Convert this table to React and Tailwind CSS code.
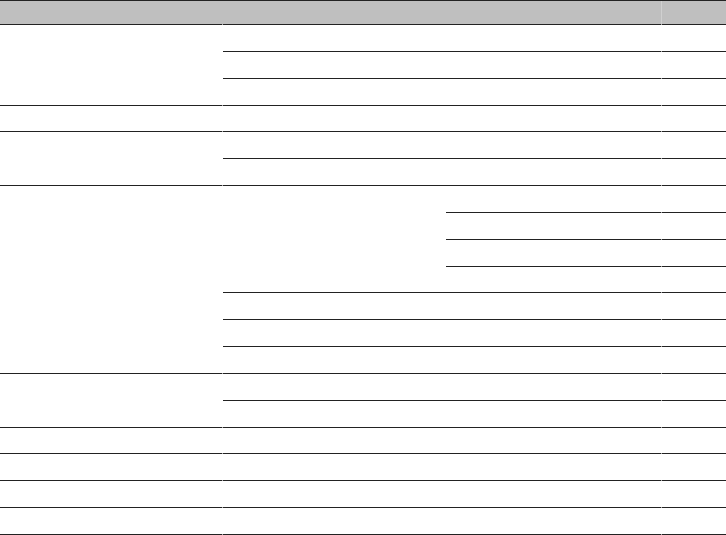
const Cell = ({ className = "" }) => (
  <div className={`border-b border-[#222] ${className}`} />
);

// thin gap between columns, where the dark rules break a little
const Gap = ({ className = "" }) => (
  <div className={`border-b border-[#a8a8a8] ${className}`} />
);

export default function App() {
  return (
    <div className="w-[726px] h-[535px] bg-white grid grid-cols-[222px_1px_223px_215px_1px_64px] grid-rows-[25px_repeat(19,1fr)]">
      {/* header */}
      <div className="col-start-1 row-start-1 bg-[#bfbfbf] border-y border-[#222]" />
      <div className="col-start-2 row-start-1 bg-[#bfbfbf] border-t border-t-[#222] border-b border-b-[#a8a8a8]" />
      <div className="col-start-3 row-start-1 bg-[#bfbfbf] border-y border-[#222]" />
      <div className="col-start-4 row-start-1 bg-[#bfbfbf] border-y border-[#222]" />
      <div className="col-start-5 row-start-1 bg-[#d0d0d0] border-t border-t-[#222] border-b border-b-[#a8a8a8]" />
      <div className="col-start-6 row-start-1 bg-[#bfbfbf] border-y border-[#222]" />

      {/* first column */}
      <Cell className="col-start-1 row-start-2 row-span-3" />
      <Cell className="col-start-1 row-start-5" />
      <Cell className="col-start-1 row-start-6 row-span-2" />
      <Cell className="col-start-1 row-start-8 row-span-7" />
      <Cell className="col-start-1 row-start-15 row-span-2" />
      <Cell className="col-start-1 row-start-17" />
      <Cell className="col-start-1 row-start-18" />
      <Cell className="col-start-1 row-start-19" />
      <Cell className="col-start-1 row-start-20" />

      <Gap className="col-start-2 row-start-2 row-span-3" />
      <Gap className="col-start-2 row-start-5" />
      <Gap className="col-start-2 row-start-6 row-span-2" />
      <Gap className="col-start-2 row-start-8 row-span-7" />
      <Gap className="col-start-2 row-start-15 row-span-2" />
      <Gap className="col-start-2 row-start-17" />
      <Gap className="col-start-2 row-start-18" />
      <Gap className="col-start-2 row-start-19" />
      <Gap className="col-start-2 row-start-20" />

      {/* second column */}
      <Cell className="col-start-3 row-start-2" />
      <Cell className="col-start-3 row-start-3" />
      <Cell className="col-start-3 row-start-4" />
      <Cell className="col-start-3 row-start-5" />
      <Cell className="col-start-3 row-start-6" />
      <Cell className="col-start-3 row-start-7" />
      <Cell className="col-start-3 row-start-8 row-span-4" />
      <Cell className="col-start-3 row-start-12" />
      <Cell className="col-start-3 row-start-13" />
      <Cell className="col-start-3 row-start-14" />
      <Cell className="col-start-3 row-start-15" />
      <Cell className="col-start-3 row-start-16" />
      <Cell className="col-start-3 row-start-17" />
      <Cell className="col-start-3 row-start-18" />
      <Cell className="col-start-3 row-start-19" />
      <Cell className="col-start-3 row-start-20" />

      {/* third column */}
      <Cell className="col-start-4 row-start-2" />
      <Cell className="col-start-4 row-start-3" />
      <Cell className="col-start-4 row-start-4" />
      <Cell className="col-start-4 row-start-5" />
      <Cell className="col-start-4 row-start-6" />
      <Cell className="col-start-4 row-start-7" />
      <Cell className="col-start-4 row-start-8" />
      <Cell className="col-start-4 row-start-9" />
      <Cell className="col-start-4 row-start-10" />
      <Cell className="col-start-4 row-start-11" />
      <Cell className="col-start-4 row-start-12" />
      <Cell className="col-start-4 row-start-13" />
      <Cell className="col-start-4 row-start-14" />
      <Cell className="col-start-4 row-start-15" />
      <Cell className="col-start-4 row-start-16" />
      <Cell className="col-start-4 row-start-17" />
      <Cell className="col-start-4 row-start-18" />
      <Cell className="col-start-4 row-start-19" />
      <Cell className="col-start-4 row-start-20" />

      <Gap className="col-start-5 row-start-2" />
      <Gap className="col-start-5 row-start-3" />
      <Gap className="col-start-5 row-start-4" />
      <Gap className="col-start-5 row-start-5" />
      <Gap className="col-start-5 row-start-6" />
      <Gap className="col-start-5 row-start-7" />
      <Gap className="col-start-5 row-start-8" />
      <Gap className="col-start-5 row-start-9" />
      <Gap className="col-start-5 row-start-10" />
      <Gap className="col-start-5 row-start-11" />
      <Gap className="col-start-5 row-start-12" />
      <Gap className="col-start-5 row-start-13" />
      <Gap className="col-start-5 row-start-14" />
      <Gap className="col-start-5 row-start-15" />
      <Gap className="col-start-5 row-start-16" />
      <Gap className="col-start-5 row-start-17" />
      <Gap className="col-start-5 row-start-18" />
      <Gap className="col-start-5 row-start-19" />
      <Gap className="col-start-5 row-start-20" />

      {/* last column */}
      <Cell className="col-start-6 row-start-2" />
      <Cell className="col-start-6 row-start-3" />
      <Cell className="col-start-6 row-start-4" />
      <Cell className="col-start-6 row-start-5" />
      <Cell className="col-start-6 row-start-6" />
      <Cell className="col-start-6 row-start-7" />
      <Cell className="col-start-6 row-start-8" />
      <Cell className="col-start-6 row-start-9" />
      <Cell className="col-start-6 row-start-10" />
      <Cell className="col-start-6 row-start-11" />
      <Cell className="col-start-6 row-start-12" />
      <Cell className="col-start-6 row-start-13" />
      <Cell className="col-start-6 row-start-14" />
      <Cell className="col-start-6 row-start-15" />
      <Cell className="col-start-6 row-start-16" />
      <Cell className="col-start-6 row-start-17" />
      <Cell className="col-start-6 row-start-18" />
      <Cell className="col-start-6 row-start-19" />
      <Cell className="col-start-6 row-start-20" />
    </div>
  );
}
